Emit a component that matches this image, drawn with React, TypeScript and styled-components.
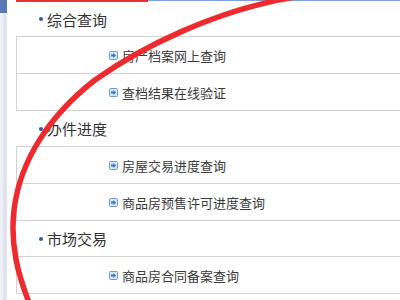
import React from 'react';
import styled, {createGlobalStyle} from "styled-components";

const GlobalStyle = createGlobalStyle`
  html, body {
    margin: 0;
    padding: 0;
    background: #ffffff;
    overflow: hidden;
  }
  body {
    font-family: "Noto Sans CJK SC", "Noto Sans", sans-serif;
    color: #333333;
  }
`

type Group = { title: string; links: string[] }

const groups: Group[] = [
    {title: '综合查询', links: ['房产档案网上查询', '查档结果在线验证']},
    {title: '办件进度', links: ['房屋交易进度查询', '商品房预售许可进度查询']},
    {title: '市场交易', links: ['商品房合同备案查询']},
]

const ArrowIcon = () => (
    <svg width="9" height="9" viewBox="0 0 9 9">
        <rect x="0.5" y="0.5" width="8" height="8" rx="1" fill="#d9e6f6" stroke="#6f9bd4"/>
        <path d="M2 3.6 H4.4 V2 L7 4.5 L4.4 7 V5.4 H2 Z" fill="#3a72c2"/>
    </svg>
)

export default function App() {
    return (
        <Page>
            <GlobalStyle/>
            <SideStrip/>
            <Content>
                <TopBar>
                    <ActiveTab/>
                </TopBar>
                {groups.map((g, i) => (
                    <section key={g.title}>
                        <Header first={i === 0}>
                            <Dot/>
                            {g.title}
                        </Header>
                        <Box>
                            {g.links.map(l => (
                                <Row key={l}>
                                    <ArrowIcon/>
                                    <LinkText>{l}</LinkText>
                                </Row>
                            ))}
                        </Box>
                    </section>
                ))}
            </Content>
            <Marker viewBox="0 0 400 300" preserveAspectRatio="none">
                <path
                    d="M295,-3 C215,10 140,48 95,80 C50,115 20,160 14,210 C10,245 18,275 30,305"
                    fill="none"
                    stroke="#ee2a2e"
                    strokeWidth="5.5"
                    strokeLinecap="round"
                />
            </Marker>
        </Page>
    );
}

const Page = styled.div`
  position: relative;
  display: flex;
  width: 400px;
  height: 300px;
  overflow: hidden;
`
const SideStrip = styled.div`
  flex: 0 0 7px;
  background: linear-gradient(to right, #eef0f8 0, #eef0f8 3px, #dfe2ef 3px, #dfe2ef 7px);
  border-top: 13px solid #5a78b6;
  box-sizing: border-box;
  width: 3px;
`
const Content = styled.div`
  flex: 1;
  margin-left: 9px;
  min-width: 0;
`
const TopBar = styled.div`
  height: 2px;
  background: linear-gradient(#7f9fd8, #7f9fd8) top / 100% 1px no-repeat;
`
const ActiveTab = styled.div`
  width: 132px;
  height: 2px;
  background: #e8302f;
`
const Header = styled.div<{ first?: boolean }>`
  height: ${p => p.first ? 34 : 35}px;
  display: flex;
  align-items: center;
  padding-left: 23px;
  font-size: 15px;
  color: #333;
  box-sizing: border-box;
`
const Dot = styled.span`
  width: 4px;
  height: 4px;
  border-radius: 50%;
  background: #2d5fa8;
  margin-right: 4px;
`
const Box = styled.div`
  border: 1px solid #d2d2d2;
  border-right: none;
`
const Row = styled.div`
  height: 36px;
  display: flex;
  align-items: center;
  padding-left: 92px;
  gap: 4px;
  font-size: 13px;
  & + & {
    border-top: 1px solid #d2d2d2;
  }
`
const LinkText = styled.span`
  color: #3a3a3a;
`
const Marker = styled.svg`
  position: absolute;
  left: 0;
  top: 0;
  width: 400px;
  height: 300px;
  pointer-events: none;
`
